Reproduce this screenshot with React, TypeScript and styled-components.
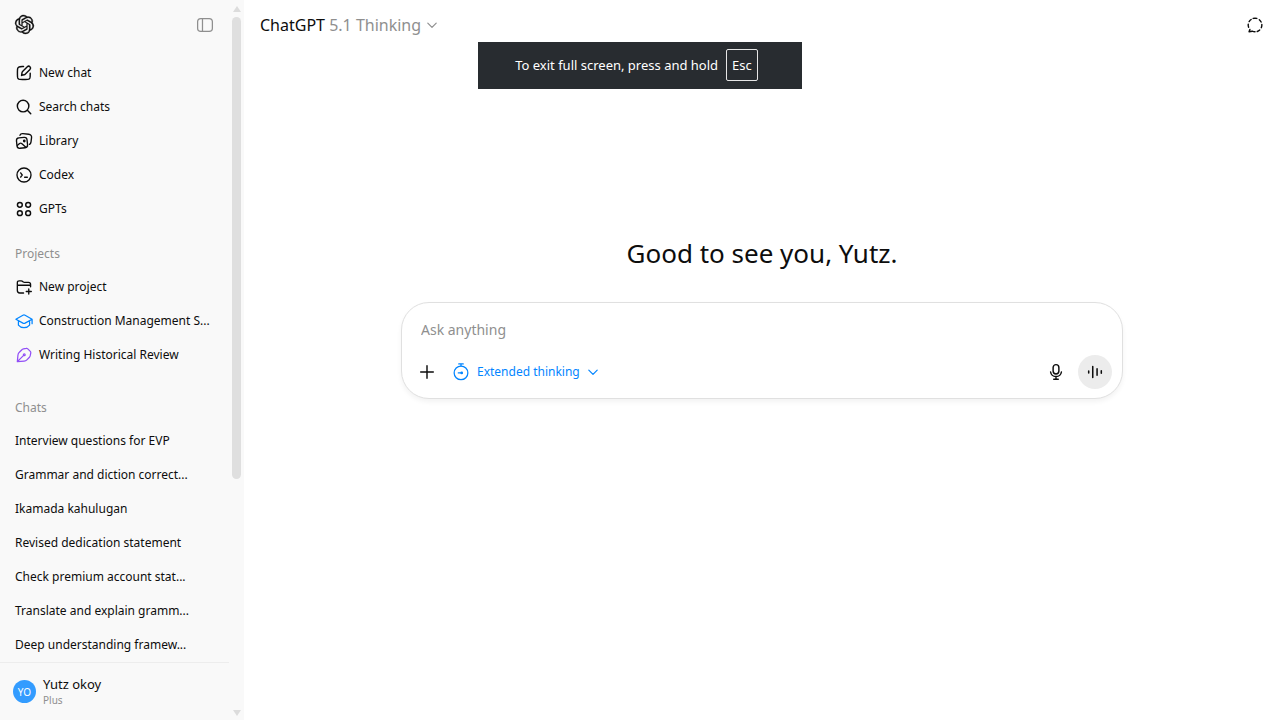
import React from 'react';
import styled, { createGlobalStyle } from 'styled-components';
import { SiOpenai } from 'react-icons/si';

const GlobalStyle = createGlobalStyle`
  *, *::before, *::after { box-sizing: border-box; }
  body {
    margin: 0;
    background: #fff;
    color: #0d0d0d;
    font-family: "Noto Sans", "Open Sans", sans-serif;
    font-size: 13px;
    line-height: 20px;
  }
  button, input { font: inherit; color: inherit; }
  button { border: 0; background: none; padding: 0; cursor: pointer; }
`;

const Shell = styled.div`
  display: flex;
  height: 100vh;
  overflow: hidden;
`;

const Sidebar = styled.aside`
  display: flex;
  flex: none;
  width: 244px;
  background: #f9f9f9;
`;

const SidebarBody = styled.div`
  display: flex;
  flex: 1;
  flex-direction: column;
  min-width: 0;
`;

const SidebarHeader = styled.header`
  display: flex;
  flex: none;
  align-items: center;
  justify-content: space-between;
  height: 56px;
  padding: 0 15px 7px 15px;
`;

const IconButton = styled.button<{ $muted?: boolean }>`
  display: flex;
  align-items: center;
  justify-content: center;
  color: ${(p) => (p.$muted ? '#8f8f8f' : '#0d0d0d')};
`;

const Logo = styled(SiOpenai)`
  stroke: currentColor;
  stroke-width: 0.4;
  overflow: visible;
`;

const SidebarScroll = styled.div`
  flex: 1;
  min-height: 0;
  overflow: hidden;
`;

const NavSection = styled.nav<{ $gap?: number }>`
  margin-bottom: ${(p) => p.$gap ?? 0}px;
`;

const SectionTitle = styled.h2`
  margin: 0;
  padding: 7px 15px 6px;
  color: #8f8f8f;
  font-size: 12px;
  font-weight: 400;
  line-height: 20px;
`;

const NavList = styled.ul`
  margin: 0;
  padding: 0;
  list-style: none;
`;

const NavLink = styled.a`
  display: flex;
  align-items: center;
  gap: 6px;
  height: 34px;
  padding: 0 15px;
  color: #0d0d0d;
  font-size: 12px;
  text-decoration: none;
  white-space: nowrap;
`;

const Account = styled.button`
  display: flex;
  flex: none;
  align-items: center;
  gap: 7px;
  height: 58px;
  padding: 0 13px;
  border-top: 1px solid #ededed;
  text-align: left;
`;

const Avatar = styled.span`
  display: flex;
  align-items: center;
  justify-content: center;
  width: 23px;
  height: 23px;
  border-radius: 50%;
  background: #339cff;
  color: #fff;
  font-size: 10px;
`;

const AccountText = styled.span`
  display: flex;
  flex-direction: column;
  line-height: 17px;
`;

const Plan = styled.small`
  color: #8f8f8f;
  font-size: 10px;
  line-height: 15px;
`;

const ScrollTrack = styled.div`
  display: flex;
  flex: none;
  flex-direction: column;
  align-items: center;
  width: 15px;
  padding: 6px 0 4px;
`;

const ScrollThumb = styled.div`
  width: 9px;
  height: 65%;
  margin: 5px 0 auto;
  border-radius: 5px;
  background: #dfdfdf;
`;

const ScrollArrow = styled.svg`
  flex: none;
  width: 8px;
  height: 6px;
  fill: #dcdcdc;
`;

const Main = styled.main`
  display: flex;
  flex: 1;
  flex-direction: column;
  min-width: 0;
`;

const TopBar = styled.header`
  display: flex;
  align-items: center;
  justify-content: space-between;
  height: 50px;
  padding: 0 16px;
`;

const ModelPicker = styled.button`
  display: flex;
  align-items: center;
  gap: 5px;
  color: #8f8f8f;
  font-size: 16px;
`;

const ModelName = styled.span`
  color: #0d0d0d;
`;

const Hero = styled.section`
  display: flex;
  flex-direction: column;
  align-items: center;
  gap: 31px;
  padding: 185px 16px 0;
`;

const Greeting = styled.h1`
  margin: 0;
  font-size: 26px;
  font-weight: 400;
  line-height: 36px;
`;

const Composer = styled.form`
  width: 100%;
  max-width: 722px;
  padding: 17px 10px 9px 16px;
  border: 1px solid #e0e0e0;
  border-radius: 28px;
  background: #fff;
  box-shadow: 0 3px 5px rgba(0, 0, 0, 0.05);
`;

const Prompt = styled.input`
  display: block;
  width: 100%;
  height: 20px;
  margin-bottom: 15px;
  padding: 0 3px;
  border: 0;
  outline: 0;
  background: transparent;
  font-size: 14px;
  &::placeholder { color: #8f8f8f; opacity: 1; }
`;

const Tools = styled.div`
  display: flex;
  align-items: center;
`;

const ThinkingButton = styled.button`
  display: flex;
  align-items: center;
  gap: 7px;
  margin: 0 auto 0 16px;
  color: #0285ff;
  font-size: 12px;
`;

const VoiceButton = styled(IconButton)`
  width: 34px;
  height: 34px;
  margin-left: 13px;
  border-radius: 50%;
  background: #ececec;
`;

const FullscreenNotice = styled.div`
  position: absolute;
  top: 42px;
  left: 50%;
  display: flex;
  align-items: center;
  justify-content: center;
  gap: 8px;
  width: 324px;
  height: 47px;
  padding: 0 7px 1px 0;
  transform: translateX(-50%);
  background: #282c30;
  color: #fff;
`;

const Key = styled.kbd`
  padding: 5px;
  border: 1px solid #e6e6e6;
  border-radius: 2px;
  font: inherit;
`;

const Svg = styled.svg<{ $color?: string }>`
  flex: none;
  fill: none;
  stroke: ${(p) => p.$color ?? 'currentColor'};
  stroke-linecap: round;
  stroke-linejoin: round;
`;

type IconProps = { size?: number; weight?: number; color?: string; children: React.ReactNode };

const Icon = ({ size = 18, weight = 1.4, color, children }: IconProps) => (
  <Svg width={size} height={size} viewBox="0 0 20 20" strokeWidth={weight} $color={color} aria-hidden="true">
    {children}
  </Svg>
);

const Chevron = ({ size = 12 }: { size?: number }) => (
  <Icon size={size} weight={2}><path d="M3 7l7 7 7-7" /></Icon>
);

const icons = {
  newChat: (
    <Icon weight={1.6}>
      <path d="M9.500 2.800H8c-2 0-3 .1-3.800.6-.5.3-.9.7-1.100 1.200C2.700 5.400 2.700 6.400 2.700 8.500v3.300c0 2 0 3 .4 3.800.3.500.7.9 1.200 1.200.8.400 1.800.400 3.800.400h3.400c2 0 3 0 3.800-.4.500-.3.900-.7 1.200-1.200.4-.8.4-1.800.4-3.800v-1.500" />
      <path d="M7.300 12.700l.5-3.100c.1-.5.300-.9.600-1.200l5.300-5.300a2.050 2.050 0 0 1 2.900 2.900l-5.300 5.300c-.3.300-.7.500-1.200.6z" />
    </Icon>
  ),
  search: <Icon weight={1.6}><circle cx="9" cy="9" r="6.400" /><path d="M13.700 13.700l3.800 3.800" /></Icon>,
  library: (
    <Icon weight={1.5}>
      <rect x="1.900" y="6.200" width="11.800" height="11.600" rx="3" transform="rotate(-6 8 12)" />
      <path d="M5.500 3.700C6 2.300 7.200 1.600 8.800 1.800l6.400.7c2.300.3 3.500 1.600 3.200 3.800l-.6 4.700c-.2 1.400-.7 2.300-1.700 2.800" />
      <path d="M2.800 14.800l2.300-2c.8-.6 1.600-.6 2.300 0l4.700 4.200" />
      <circle cx="10.300" cy="10" r=".8" />
    </Icon>
  ),
  codex: <Icon weight={1.5}><circle cx="10" cy="10" r="7.800" /><path d="M6.300 7.600l1.700 2.400-1.700 2.400M10.700 12.500h3" /></Icon>,
  gpts: (
    <Icon weight={1.600}>
      <circle cx="5.400" cy="5.400" r="2.700" /><circle cx="14.600" cy="5.400" r="2.700" />
      <circle cx="5.400" cy="14.600" r="2.700" /><circle cx="14.600" cy="14.600" r="2.700" />
    </Icon>
  ),
  newProject: (
    <Icon weight={1.5}>
      <path d="M9.500 16.700H5.300c-1.700 0-2.700-1-2.700-2.700V5.200c0-1.300.8-2 2-2h2.300c.7 0 1.200.2 1.700.7l.5.400c.4.400.9.500 1.500.5h4.300c1.500 0 2.400.8 2.400 2.300v2.600M2.700 8h14.500M15.300 12.200v5.600M12.500 15h5.600" />
    </Icon>
  ),
  gradCap: (
    <Icon color="#0285ff">
      <path d="M1 8L8.800 3.600c.8-.4 1.600-.4 2.400 0L19 8l-7.800 4.400c-.8.400-1.600.400-2.400 0zM3.800 10v4.500c1.500 1.900 3.600 2.900 6.200 2.900s4.700-1 6.200-2.900V10M19 8.300V13" />
    </Icon>
  ),
  pen: (
    <Icon color="#924ff7">
      <path d="M2.600 17.400l.7-7.400c.1-1.200.6-2.200 1.500-3l2.600-2.600c.6-.6 1.300-.9 2.100-1.100l2.900-.6c.7-.2 1.300 0 1.800.5l2.800 2.800c.5.500.7 1.100.5 1.800l-.6 2.900c-.2.800-.5 1.500-1.100 2.100l-2.600 2.600c-.8.900-1.800 1.400-3 1.500zl7-7" />
      <circle cx="10.300" cy="9.700" r="1" />
    </Icon>
  ),
};

type Entry = { label: string; icon?: React.ReactNode };

const mainLinks: Entry[] = [
  { label: 'New chat', icon: icons.newChat },
  { label: 'Search chats', icon: icons.search },
  { label: 'Library', icon: icons.library },
  { label: 'Codex', icon: icons.codex },
  { label: 'GPTs', icon: icons.gpts },
];

const projects: Entry[] = [
  { label: 'New project', icon: icons.newProject },
  { label: 'Construction Management S...', icon: icons.gradCap },
  { label: 'Writing Historical Review', icon: icons.pen },
];

const chats: Entry[] = [
  'Interview questions for EVP',
  'Grammar and diction correct...',
  'Ikamada kahulugan',
  'Revised dedication statement',
  'Check premium account stat...',
  'Translate and explain gramm...',
  'Deep understanding framew...',
].map((label) => ({ label }));

const Links = ({ entries }: { entries: Entry[] }) => (
  <NavList>
    {entries.map(({ label, icon }) => (
      <li key={label}><NavLink href="#">{icon}{label}</NavLink></li>
    ))}
  </NavList>
);

export default function App() {
  return (
    <>
      <GlobalStyle />
      <Shell>
        <Sidebar>
          <SidebarBody>
            <SidebarHeader>
              <IconButton type="button" aria-label="Home"><Logo size={19} /></IconButton>
              <IconButton type="button" aria-label="Close sidebar" $muted>
                <Icon><rect x="1.800" y="3" width="16.400" height="14" rx="3.500" /><path d="M7.200 3v14" /></Icon>
              </IconButton>
            </SidebarHeader>
            <SidebarScroll>
              <NavSection aria-label="Main" $gap={11}><Links entries={mainLinks} /></NavSection>
              <NavSection aria-label="Projects" $gap={19}>
                <SectionTitle>Projects</SectionTitle>
                <Links entries={projects} />
              </NavSection>
              <NavSection aria-label="Chats">
                <SectionTitle>Chats</SectionTitle>
                <Links entries={chats} />
              </NavSection>
            </SidebarScroll>
            <Account type="button">
              <Avatar>YO</Avatar>
              <AccountText>Yutz okoy<Plan>Plus</Plan></AccountText>
            </Account>
          </SidebarBody>
          <ScrollTrack aria-hidden="true">
            <ScrollArrow viewBox="0 0 8 6"><path d="M4 0l4 6H0z" /></ScrollArrow>
            <ScrollThumb />
            <ScrollArrow viewBox="0 0 8 6"><path d="M4 6l4-6H0z" /></ScrollArrow>
          </ScrollTrack>
        </Sidebar>
        <Main>
          <TopBar>
            <ModelPicker type="button">
              <span><ModelName>ChatGPT</ModelName> 5.1 Thinking</span>
              <Chevron />
            </ModelPicker>
            <IconButton type="button" aria-label="Temporary chat">
              <Icon weight={1.6}>
                <path d="M8 2.700a7.600 7.600 0 0 1 4 0M14.800 4.100a7.600 7.600 0 0 1 2 2.600M17.600 9.500a7.600 7.600 0 0 1-.6 3.500M15.200 15.600a7.600 7.600 0 0 1-2.700 1.600M10 17.600a7.600 7.600 0 0 1-3.100-.7l-3.500.6.900-2.500M2.900 12.500a7.600 7.600 0 0 1-.4-3.500M3.500 6.200a7.600 7.600 0 0 1 2.200-2.300" />
              </Icon>
            </IconButton>
          </TopBar>
          <Hero>
            <Greeting>Good to see you, Yutz.</Greeting>
            <Composer onSubmit={(e) => e.preventDefault()}>
              <Prompt type="text" placeholder="Ask anything" aria-label="Ask anything" />
              <Tools>
                <IconButton type="button" aria-label="Add files">
                  <Icon weight={1.6}><path d="M10 3v14M3 10h14" /></Icon>
                </IconButton>
                <ThinkingButton type="button">
                  <Icon>
                    <circle cx="10" cy="11" r="7.600" /><path d="M7.500 1h5M10 1v2" />
                    <path d="M7 11h3.500" /><circle cx="10.800" cy="11" r=".8" />
                  </Icon>
                  <span>Extended thinking</span>
                  <Chevron />
                </ThinkingButton>
                <IconButton type="button" aria-label="Dictate">
                  <Icon weight={1.6}>
                    <rect x="6.800" y="1.800" width="6.400" height="10.400" rx="3.200" />
                    <path d="M4 10c.5 3.200 2.800 5 6 5s5.500-1.800 6-5M10 15v3M7.500 18h5" />
                  </Icon>
                </IconButton>
                <VoiceButton type="button" aria-label="Use voice">
                  <Icon weight={1.700}><path d="M3 9v2M7.500 4v12M12.300 6.500v7M17 8.500v3" /></Icon>
                </VoiceButton>
              </Tools>
            </Composer>
          </Hero>
        </Main>
      </Shell>
      <FullscreenNotice role="status">
        <span>To exit full screen, press and hold</span>
        <Key>Esc</Key>
      </FullscreenNotice>
    </>
  );
}
